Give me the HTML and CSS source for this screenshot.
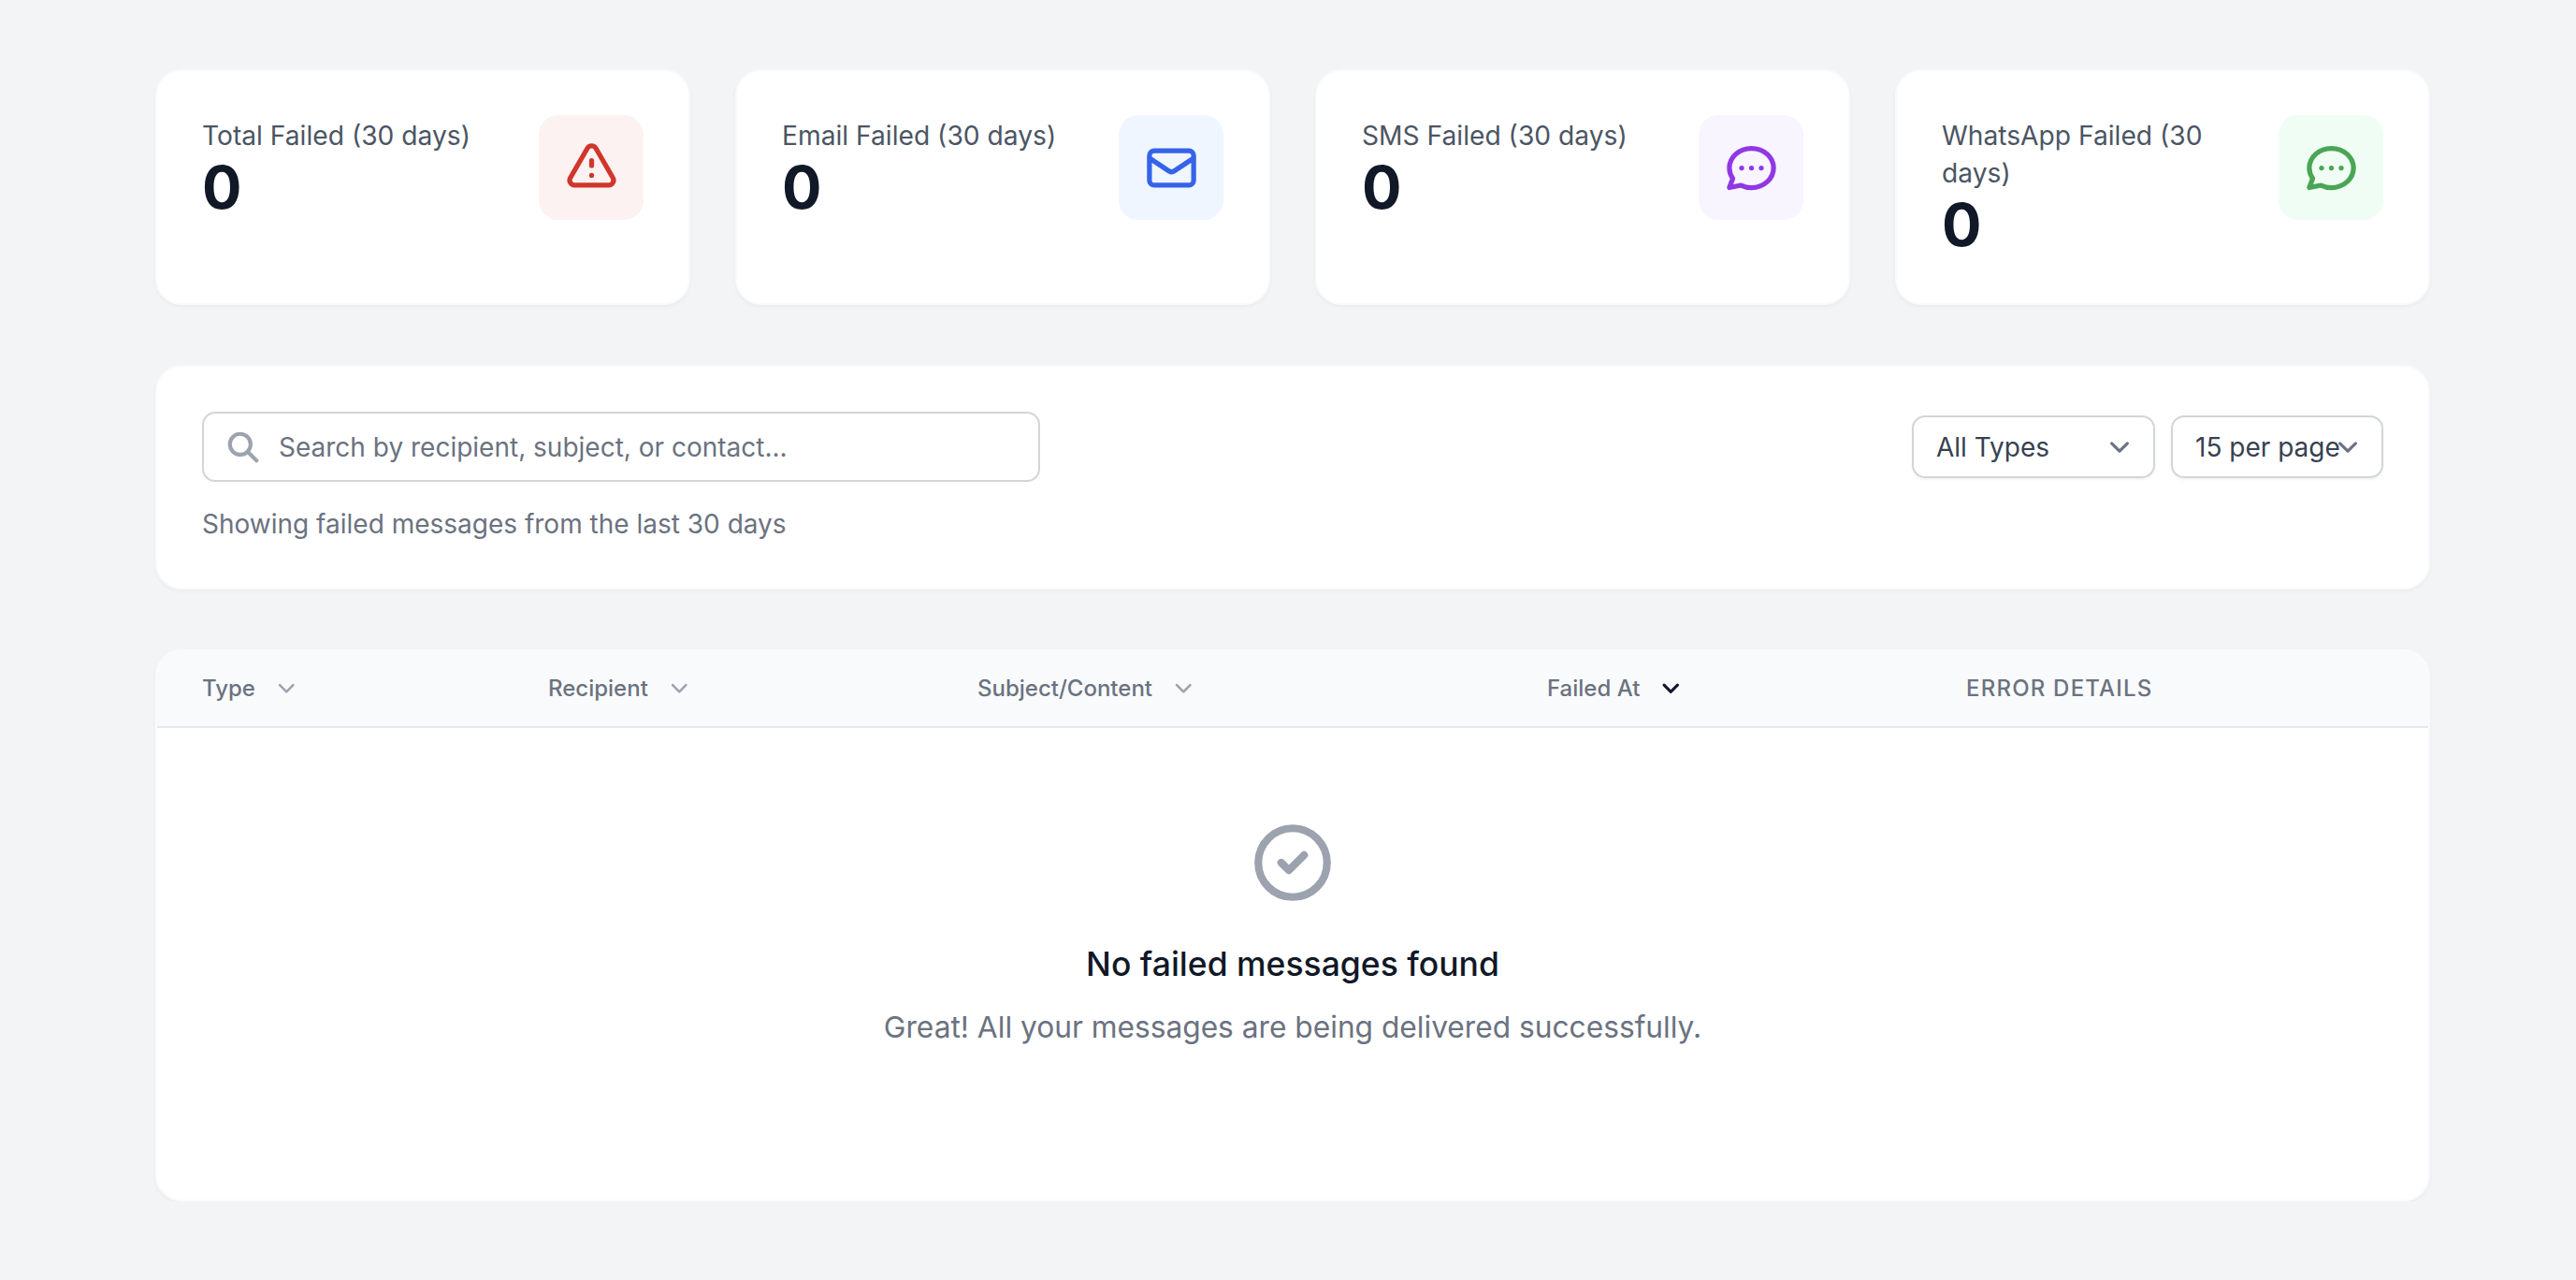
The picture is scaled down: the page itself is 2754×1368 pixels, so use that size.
FILE: index.html
```html
<!DOCTYPE html>
<html lang="en">
<head>
    <meta charset="UTF-8">
    <meta name="viewport" content="width=device-width, initial-scale=1.0">
    <title>Failed Messages</title>
    <link rel="stylesheet" href="styles.css">
</head>
<body>
    <!-- Stat cards -->
    <div class="stats">
        <div class="card stat">
            <div class="stat-text">
                <p class="stat-label">Total Failed (30 days)</p>
                <p class="stat-value">0</p>
            </div>
            <div class="stat-icon icon-red">
                <svg viewBox="0 0 24 24"><path d="M12 9v2m0 4h.01m-6.938 4h13.856c1.54 0 2.502-1.667 1.732-3L13.732 4c-.77-1.333-2.694-1.333-3.464 0L3.34 16c-.77 1.333.192 3 1.732 3z"/></svg>
            </div>
        </div>
        <div class="card stat">
            <div class="stat-text">
                <p class="stat-label">Email Failed (30 days)</p>
                <p class="stat-value">0</p>
            </div>
            <div class="stat-icon icon-blue">
                <svg viewBox="0 0 24 24"><path d="M3 8l7.89 5.26a2 2 0 002.22 0L21 8M5 19h14a2 2 0 002-2V7a2 2 0 00-2-2H5a2 2 0 00-2 2v10a2 2 0 002 2z"/></svg>
            </div>
        </div>
        <div class="card stat">
            <div class="stat-text">
                <p class="stat-label">SMS Failed (30 days)</p>
                <p class="stat-value">0</p>
            </div>
            <div class="stat-icon icon-purple">
                <svg viewBox="0 0 24 24"><path d="M8 12h.01M12 12h.01M16 12h.01M21 12c0 4.418-4.03 8-9 8a9.863 9.863 0 01-4.255-.949L3 20l1.395-3.72C3.512 15.042 3 13.574 3 12c0-4.418 4.03-8 9-8s9 3.582 9 8z"/></svg>
            </div>
        </div>
        <div class="card stat">
            <div class="stat-text">
                <p class="stat-label">WhatsApp Failed (30 days)</p>
                <p class="stat-value">0</p>
            </div>
            <div class="stat-icon icon-green">
                <svg viewBox="0 0 24 24"><path d="M8 12h.01M12 12h.01M16 12h.01M21 12c0 4.418-4.03 8-9 8a9.863 9.863 0 01-4.255-.949L3 20l1.395-3.72C3.512 15.042 3 13.574 3 12c0-4.418 4.03-8 9-8s9 3.582 9 8z"/></svg>
            </div>
        </div>
    </div>

    <!-- Filters -->
    <div class="card filters">
        <div class="filters-row">
            <label class="search">
                <svg class="search-icon" viewBox="0 0 24 24"><path d="M21 21l-6-6m2-5a7 7 0 11-14 0 7 7 0 0114 0z"/></svg>
                <input class="search-input" type="text" placeholder="Search by recipient, subject, or contact...">
            </label>
            <div class="selects">
                <div class="select select-type">All Types
                    <svg class="select-arrow" viewBox="0 0 20 20"><path d="M6 8l4 4 4-4"/></svg>
                </div>
                <div class="select select-page">15 per page
                    <svg class="select-arrow" viewBox="0 0 20 20"><path d="M6 8l4 4 4-4"/></svg>
                </div>
            </div>
        </div>
        <p class="filters-note">Showing failed messages from the last 30 days</p>
    </div>

    <!-- Table -->
    <div class="card messages">
        <div class="table-head">
            <div class="th">Type <svg class="sort" viewBox="0 0 24 24"><path d="M19 9l-7 7-7-7"/></svg></div>
            <div class="th">Recipient <svg class="sort" viewBox="0 0 24 24"><path d="M19 9l-7 7-7-7"/></svg></div>
            <div class="th">Subject/Content <svg class="sort" viewBox="0 0 24 24"><path d="M19 9l-7 7-7-7"/></svg></div>
            <div class="th">Failed At <svg class="sort sort-active" viewBox="0 0 24 24"><path d="M19 9l-7 7-7-7"/></svg></div>
            <div class="th th-plain">Error Details</div>
        </div>
        <div class="empty">
            <svg class="empty-icon" viewBox="0 0 24 24"><path d="M9 12l2 2 4-4m6 2a9 9 0 11-18 0 9 9 0 0118 0z"/></svg>
            <h3 class="empty-title">No failed messages found</h3>
            <p class="empty-text">Great! All your messages are being delivered successfully.</p>
        </div>
    </div>
</body>
</html>
```

FILE: styles.css
```css
* {
    box-sizing: border-box;
}
body {
    margin: 0;
    padding: 74px 156px 0 166px;
    font-family: Inter, "Noto Sans", sans-serif;
    background-color: #f3f4f6;
}
p, h3 {
    margin: 0;
}
svg {
    fill: none;
    stroke: currentColor;
    stroke-width: 2;
    stroke-linecap: round;
    stroke-linejoin: round;
    flex-shrink: 0;
}
.card {
    background-color: white;
    border: 2px solid #f9fafb;
    border-radius: 28px;
    box-shadow: 0 2px 4px rgba(0,0,0,0.04);
}

/* stat cards */
.stats {
    display: grid;
    grid-template-columns: repeat(4, 1fr);
    gap: 48px;
}
.stat {
    display: flex;
    justify-content: space-between;
    align-items: flex-start;
    gap: 28px;
    padding: 47px 48px 49px 48px;
}
.stat-text {
    padding-top: 2px;
}
.stat-label {
    font-size: 28.2px;
    line-height: 40px;
    color: #4b5563;
}
.stat-value {
    font-size: 63px;
    line-height: 70px;
    font-weight: 650;
    color: #111827;
}
.stat-icon {
    display: flex;
    align-items: center;
    justify-content: center;
    width: 112px;
    height: 112px;
    border-radius: 21px;
    flex-shrink: 0;
}
.stat-icon svg {
    width: 63px;
    height: 63px;
}
.icon-red {
    background-color: #fdf2f2;
    color: #d1362b;
}
.icon-blue {
    background-color: #eff6ff;
    color: #3563e9;
}
.icon-purple {
    background-color: #f8f5ff;
    color: #9037e6;
}
.icon-green {
    background-color: #f0fdf4;
    color: #4aa655;
}

/* filters */
.filters {
    margin-top: 64px;
    padding: 48px 48px 48px 48px;
}
.filters-row {
    display: flex;
    justify-content: space-between;
    align-items: center;
}
.search {
    position: relative;
    display: block;
    width: 896px;
}
.search-icon {
    position: absolute;
    left: 25px;
    top: 19px;
    width: 38px;
    height: 38px;
    color: #9ca3af;
    stroke-width: 2.6;
}
.search-input {
    display: block;
    width: 100%;
    height: 75px;
    padding: 0 20px 0 80px;
    border: 2px solid #d1d5db;
    border-radius: 14px;
    outline: none;
    background: white;
    font-family: inherit;
    font-size: 28px;
    color: #374151;
}
.search-input::placeholder {
    color: #6b7280;
    opacity: 1;
}
.selects {
    display: flex;
    gap: 17px;
}
.select {
    position: relative;
    height: 67px;
    padding-left: 24px;
    border: 2px solid #d1d5db;
    border-radius: 14px;
    box-shadow: 0 2px 3px rgba(0,0,0,0.05);
    font-size: 28px;
    line-height: 64px;
    color: #374151;
}
.select-type {
    width: 260px;
}
.select-page {
    width: 227px;
}
.select-arrow {
    position: absolute;
    right: 15px;
    top: 11px;
    width: 42px;
    height: 42px;
    color: #6b7280;
    stroke-width: 1.5;
}
.filters-note {
    margin-top: 25px;
    font-size: 28px;
    line-height: 40px;
    color: #6b7280;
}

/* table */
.messages {
    height: 590px;
    margin-top: 64px;
    overflow: hidden;
}
.table-head {
    display: grid;
    grid-template-columns: 370px 459px 609px 448px 1fr;
    height: 82px;
    padding: 0 0 2px 48px;
    align-items: center;
    background-color: #f9fafb;
    border-bottom: 2px solid #e5e7eb;
}
.th {
    display: flex;
    align-items: center;
    gap: 21px;
    font-size: 24px;
    font-weight: 450;
    color: #6b7280;
}
.th-plain {
    text-transform: uppercase;
    letter-spacing: 1.2px;
}
.sort {
    width: 24.5px;
    height: 24.5px;
    color: #9ca3af;
    stroke-width: 2.5;
}
.sort-active {
    color: #111827;
    stroke-width: 3;
}
.empty {
    display: flex;
    flex-direction: column;
    align-items: center;
    padding-top: 95px;
}
.empty-icon {
    width: 98px;
    height: 98px;
    color: #9ca3af;
}
.empty-title {
    margin-top: 36px;
    font-size: 35.5px;
    line-height: 48px;
    font-weight: 500;
    color: #111827;
}
.empty-text {
    margin-top: 22px;
    font-size: 31.7px;
    line-height: 42px;
    color: #6b7280;
}
```
